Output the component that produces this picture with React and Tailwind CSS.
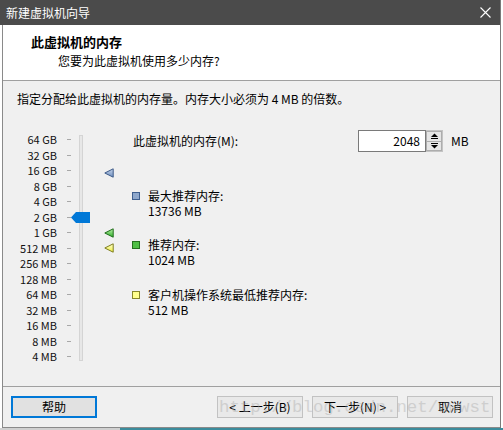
import React from "react";

const labels = ["64 GB","32 GB","16 GB","8 GB","4 GB","2 GB","1 GB","512 MB","256 MB","128 MB","64 MB","32 MB","16 MB","8 MB","4 MB"];

function Marker({ id, c1, c2, stroke }) {
  return (
    <svg width="10" height="10" viewBox="0 0 10 10">
      <defs>
        <linearGradient id={id} x1="0" y1="0" x2="0" y2="1">
          <stop offset="0" stopColor={c1} />
          <stop offset="1" stopColor={c2} />
        </linearGradient>
      </defs>
      <polygon points="0.8,5 9.2,0.8 9.2,9.2" fill={`url(#${id})`} stroke={stroke} strokeWidth="1" strokeLinejoin="round" />
    </svg>
  );
}

function Square({ fill, border }) {
  return <div className={`w-[8px] h-[8px] border ${border} ${fill} shrink-0`} />;
}

export default function App() {
  const font = "font-['Noto_Sans_CJK_SC','Noto_Sans',sans-serif]";
  return (
    <div className={`w-[503px] h-[430px] bg-white relative overflow-hidden flex flex-col text-[12px] text-black ${font}`}>
      <div className="w-[501px] h-[428px] flex flex-col border-r border-[#7a7a7a] shrink-0">
        {/* title bar */}
        <div className="h-[25px] bg-[#4b4b4b] flex items-center justify-between pl-[6px] pr-[9px] shrink-0">
          <span className="text-white text-[12px] leading-none">新建虚拟机向导</span>
          <svg width="11" height="11" viewBox="0 0 11 11">
            <path d="M0.5 0.5 L10.5 10.5 M10.5 0.5 L0.5 10.5" stroke="#ffffff" strokeWidth="1.1" />
          </svg>
        </div>
        <div className="flex-1 flex flex-col ml-[2px] border-l border-[#8a8a8a] border-b bg-[#f0f0f0]">
          {/* header */}
          <div className="h-[56px] bg-white border-b border-[#a0a0a0] shrink-0 pt-[8px]">
            <div className="pl-[28px] font-bold text-[13px] leading-[18px]">此虚拟机的内存</div>
            <div className="pl-[55px] text-[12px] leading-[18px] mt-[1px]">您要为此虚拟机使用多少内存?</div>
          </div>
          {/* body */}
          <div className="h-[305px] shrink-0 flex flex-col">
            <div className="pl-[14px] pt-[10px] leading-[16px]">指定分配给此虚拟机的内存量。内存大小必须为 4 MB 的倍数。</div>
            <div className="flex mt-[23px]">
              <div className="w-[129px] relative flex mt-[2px] shrink-0">
                <div className="flex flex-col">
                  {labels.map((l) => (
                    <div key={l} className="h-[15.5px] flex items-center">
                      <div className="w-[54px] text-right leading-none text-[11px] text-[#111]">{l}</div>
                      <div className="w-[4px] h-px bg-[#a8a8a8] ml-[10px]" />
                    </div>
                  ))}
                </div>
                <div className="ml-[8px] mt-[3px] w-[4px] h-[226px] bg-[#e7e7e7] border border-[#d4d4d4]" />
                <svg className="absolute left-[68px] top-[80px]" width="19" height="11" viewBox="0 0 19 11">
                  <polygon points="0,5.5 5,0 19,0 19,11 5,11" fill="#0078d7" />
                </svg>
                <div className="absolute left-[101px] top-[36px]">
                  <Marker id="gb" c1="#c4d3ea" c2="#6f8fbf" stroke="#3d5a88" />
                </div>
                <div className="absolute left-[101px] top-[96px]">
                  <Marker id="gg" c1="#b9f0a8" c2="#2fae2a" stroke="#1f6d1a" />
                </div>
                <div className="absolute left-[101px] top-[111px]">
                  <Marker id="gy" c1="#ffffd0" c2="#f0f040" stroke="#7d7d20" />
                </div>
              </div>
              <div className="flex flex-col flex-1">
                <div className="flex items-center h-[22px]">
                  <div className="w-[226px] pl-[1px] leading-none">此虚拟机的内存(M):</div>
                  <div className="w-[68px] h-[22px] bg-white border border-[#7a7a7a] flex items-center justify-end pr-[5px] leading-none">2048</div>
                  <div className="w-[17px] h-[22px] flex flex-col border border-l-0 border-[#c4c4c4] bg-[#f0f0f0]">
                    <div className="flex-1 border border-[#adadad] bg-[#e5e5e5] flex items-center justify-center">
                      <svg width="7" height="6" viewBox="0 0 7 6"><polygon points="3.5,0.5 7,4 0,4" fill="#000" /><rect x="0" y="5" width="7" height="1" fill="#000" /></svg>
                    </div>
                    <div className="flex-1 border border-t-0 border-[#adadad] bg-[#e5e5e5] flex items-center justify-center">
                      <svg width="7" height="6" viewBox="0 0 7 6"><rect x="0" y="0" width="7" height="1" fill="#000" /><polygon points="0,2 7,2 3.5,5.5" fill="#000" /></svg>
                    </div>
                  </div>
                  <div className="ml-[8px] leading-none">MB</div>
                </div>
                <div className="flex items-start mt-[36px]">
                  <div className="mt-[4px]"><Square fill="bg-[#8fa8cc]" border="border-[#3f5f8f]" /></div>
                  <div className="ml-[8px] leading-[15px]">
                    <div>最大推荐内存:</div>
                    <div>13736 MB</div>
                  </div>
                </div>
                <div className="flex items-start mt-[19px]">
                  <div className="mt-[4px]"><Square fill="bg-[#4fbf45]" border="border-[#25701f]" /></div>
                  <div className="ml-[8px] leading-[15px]">
                    <div>推荐内存:</div>
                    <div>1024 MB</div>
                  </div>
                </div>
                <div className="flex items-start mt-[20px]">
                  <div className="mt-[4px]"><Square fill="bg-[#ffff8c]" border="border-[#86862a]" /></div>
                  <div className="ml-[8px] leading-[15px]">
                    <div>客户机操作系统最低推荐内存:</div>
                    <div>512 MB</div>
                  </div>
                </div>
              </div>
            </div>
          </div>
          {/* footer */}
          <div className="flex-1 border-t border-[#a0a0a0] flex items-start pt-[9px] pl-[8px] pr-[7px]">
            <button className="w-[86px] h-[22px] bg-[#e1e1e1] border-2 border-[#0078d7] leading-none">帮助</button>
            <div className="flex-1" />
            <div className="flex gap-[9px]">
              <button className="w-[86px] h-[22px] bg-[#e9e9e9] border border-[#c2c2c2] leading-none">&lt; 上一步(B)</button>
              <button className="w-[86px] h-[22px] bg-[#e9e9e9] border border-[#c2c2c2] leading-none">下一步(N) &gt;</button>
              <button className="w-[86px] h-[22px] bg-[#e9e9e9] border border-[#c2c2c2] leading-none">取消</button>
            </div>
          </div>
        </div>
      </div>
      <div className="flex h-[2px]">
        <div className="w-[120px] bg-[#d0d0d0]" />
        <div className="flex-1 bg-[#3c8c9c]" />
      </div>
      <div className="absolute left-[219px] top-[396px] font-['Liberation_Mono',monospace] text-[17.4px] leading-[24px] text-[#a8a8a8] opacity-40 pointer-events-none whitespace-nowrap">http://blog.csdn.net/wwwst</div>
    </div>
  );
}
